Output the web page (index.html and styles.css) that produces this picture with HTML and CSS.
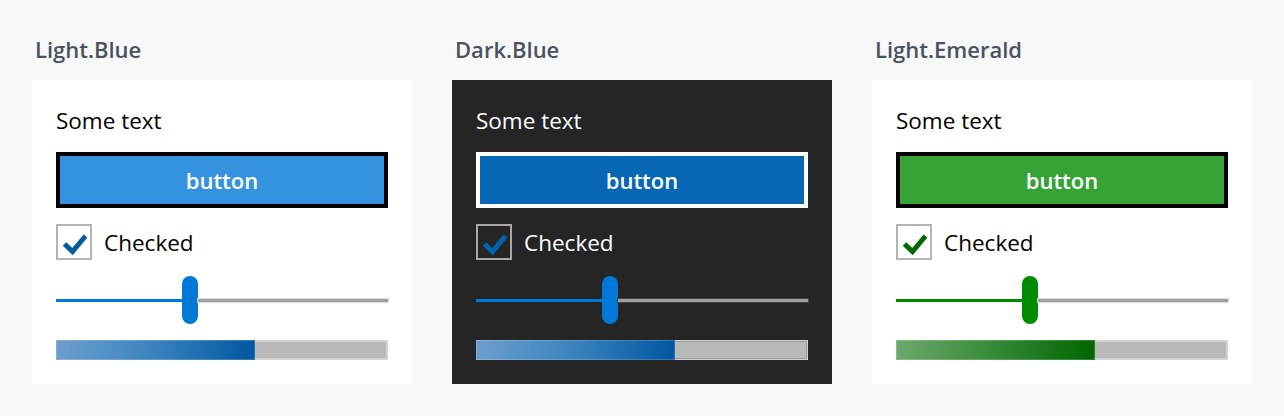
FILE: index.html
```html
<!DOCTYPE html>
<html>
<head>
<meta charset="utf-8">
<link rel="stylesheet" href="styles.css">
</head>
<body>
<div class="page">
  <div class="col">
    <div class="title">Light.Blue</div>
    <div class="panel light blue">
      <div class="text">Some text</div>
      <div class="btn">button</div>
      <div class="check">
        <span class="box"><svg width="32" height="32" viewBox="0 0 32 32"><polyline points="6.5,18 14.5,25.5 27.5,10" /></svg></span>
        <span class="label">Checked</span>
      </div>
      <div class="slider">
        <div class="fill"></div><div class="thumb"></div><div class="rest"></div>
      </div>
      <div class="progress"><div class="bar" style="width:60%"></div></div>
    </div>
  </div>
  <div class="col">
    <div class="title">Dark.Blue</div>
    <div class="panel dark blue">
      <div class="text">Some text</div>
      <div class="btn">button</div>
      <div class="check">
        <span class="box"><svg width="32" height="32" viewBox="0 0 32 32"><polyline points="6.5,18 14.5,25.5 27.5,10" /></svg></span>
        <span class="label">Checked</span>
      </div>
      <div class="slider">
        <div class="fill"></div><div class="thumb"></div><div class="rest"></div>
      </div>
      <div class="progress"><div class="bar" style="width:60%"></div></div>
    </div>
  </div>
  <div class="col">
    <div class="title">Light.Emerald</div>
    <div class="panel light emerald">
      <div class="text">Some text</div>
      <div class="btn">button</div>
      <div class="check">
        <span class="box"><svg width="32" height="32" viewBox="0 0 32 32"><polyline points="6.5,18 14.5,25.5 27.5,10" /></svg></span>
        <span class="label">Checked</span>
      </div>
      <div class="slider">
        <div class="fill"></div><div class="thumb"></div><div class="rest"></div>
      </div>
      <div class="progress"><div class="bar" style="width:60%"></div></div>
    </div>
  </div>
</div>
</body>
</html>
```
FILE: styles.css
```css
* { box-sizing: border-box; }
html, body { margin: 0; padding: 0; }
body {
  background: #f7f8fa;
  font-family: "Open Sans", "Noto Sans", sans-serif;
  width: 1284px;
  height: 416px;
  overflow: hidden;
}
.page {
  display: flex;
  gap: 40px;
  padding: 32px 32px 0 32px;
}
.col {
  display: flex;
  flex-direction: column;
  width: 380px;
}
.title {
  font-size: 22px;
  font-weight: 600;
  color: #4a5260;
  line-height: 34px;
  height: 34px;
  margin-bottom: 14px;
  padding-left: 3px;
}
.panel {
  height: 304px;
  padding: 24px;
  display: flex;
  flex-direction: column;
  gap: 16px;
}
.panel.light { background: #ffffff; color: #000; }
.panel.dark { background: #252525; color: #fff; }
.text {
  font-size: 22.5px;
  line-height: 32px;
  height: 32px;
  padding-top: 1px;
}
.btn {
  height: 56px;
  border: 4px solid #000;
  display: flex;
  align-items: center;
  justify-content: center;
  font-size: 22px;
  font-weight: 600;
  color: #fff;
  padding-bottom: 1px;
}
.light.blue .btn { background: #3592de; }
.dark.blue .btn { background: #0767b5; border-color: #fff; }
.light.emerald .btn { background: #35a336; }
.check {
  display: flex;
  align-items: center;
  gap: 12px;
  height: 36px;
}
.box {
  width: 36px;
  height: 36px;
  border: 2px solid #b4b4b4;
  display: flex;
}
.dark .box { border-color: #a8a8a8; }
.box svg polyline {
  fill: none;
  stroke-width: 5;
  stroke-linejoin: miter;
}
.light.blue .box polyline { stroke: #005a9e; }
.dark.blue .box polyline { stroke: #0063b1; }
.light.emerald .box polyline { stroke: #006a00; }
.label {
  font-size: 22.5px;
  line-height: 32px;
  padding-top: 2px;
}
.slider {
  display: flex;
  align-items: center;
  height: 48px;
}
.fill { width: 126px; height: 3px; }
.rest { flex: 1; height: 3px; background: #a0a0a0; box-shadow: 0 0 0 1px #dcdcdc; }
.dark .rest { box-shadow: 0 0 0 1px #454545; }
.thumb { width: 16px; height: 48px; border-radius: 8px; }
.blue .fill, .blue .thumb { background: #0078d7; }
.emerald .fill, .emerald .thumb { background: #008a00; }
.progress {
  height: 20px;
  background: #b9b9b9;
  box-shadow: inset 0 0 0 2px #d3d3d3;
  display: flex;
}
.dark .progress { box-shadow: inset 0 0 0 1px #cfcfcf, inset 0 0 0 2px #9c9c9c; }
.bar { height: 100%; }
.blue .bar {
  background: linear-gradient(to right, #6d9fcd, #3f86c0 45%, #0057a1);
  box-shadow: inset 0 0 0 1px rgba(255,255,255,0.18);
}
.emerald .bar {
  background: linear-gradient(to right, #6ea86e, #3a8d3a 45%, #006600);
  box-shadow: inset 0 0 0 1px rgba(255,255,255,0.18);
}
```
